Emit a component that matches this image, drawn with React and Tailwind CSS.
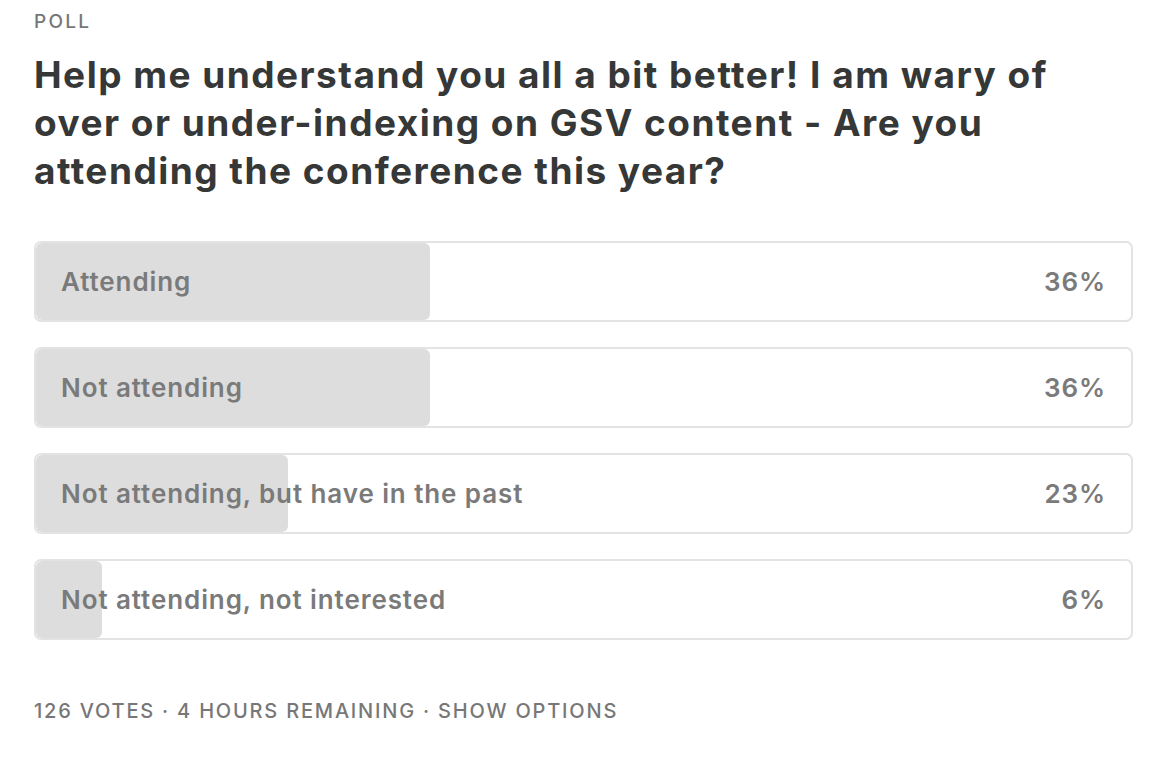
import React from 'react';

const options = [
  { label: 'Attending', pct: 36 },
  { label: 'Not attending', pct: 36 },
  { label: 'Not attending, but have in the past', pct: 23 },
  { label: 'Not attending, not interested', pct: 6 },
];

const App = () => {
  return (
    <div className="min-h-screen bg-white px-[34px] pt-[9px] font-['Inter',sans-serif]">
      <p className="text-[19px] leading-[26px] font-medium tracking-[0.12em] text-[#777777]">POLL</p>

      <h1 className="mt-[16px] w-[1040px] text-[37px] leading-[48px] font-bold tracking-[0.04em] text-[#363737]">
        Help me understand you all a bit better! I am wary of over or under-indexing on GSV content - Are you attending the conference this year?
      </h1>

      <div className="mt-[46px] flex w-[1099px] flex-col gap-[25px]">
        {options.map((opt) => (
          <div
            key={opt.label}
            className="relative h-[81px] overflow-hidden rounded-[7px] border-2 border-[#e3e3e3] bg-white"
          >
            <div
              className="absolute inset-y-0 left-0 rounded-[6px] bg-[#dddddd]"
              style={{ width: `${opt.pct}%` }}
            />
            <div className="relative flex h-full items-center justify-between px-[25px] text-[26px] font-semibold tracking-[0.035em] text-[#7a7a7a]">
              <span>{opt.label}</span>
              <span>{opt.pct}%</span>
            </div>
          </div>
        ))}
      </div>

      <p className="mt-[57px] text-[20px] leading-[28px] font-medium tracking-[0.09em] text-[#777777]">
        126 VOTES · 4 HOURS REMAINING · SHOW OPTIONS
      </p>
    </div>
  );
};

export default App;
